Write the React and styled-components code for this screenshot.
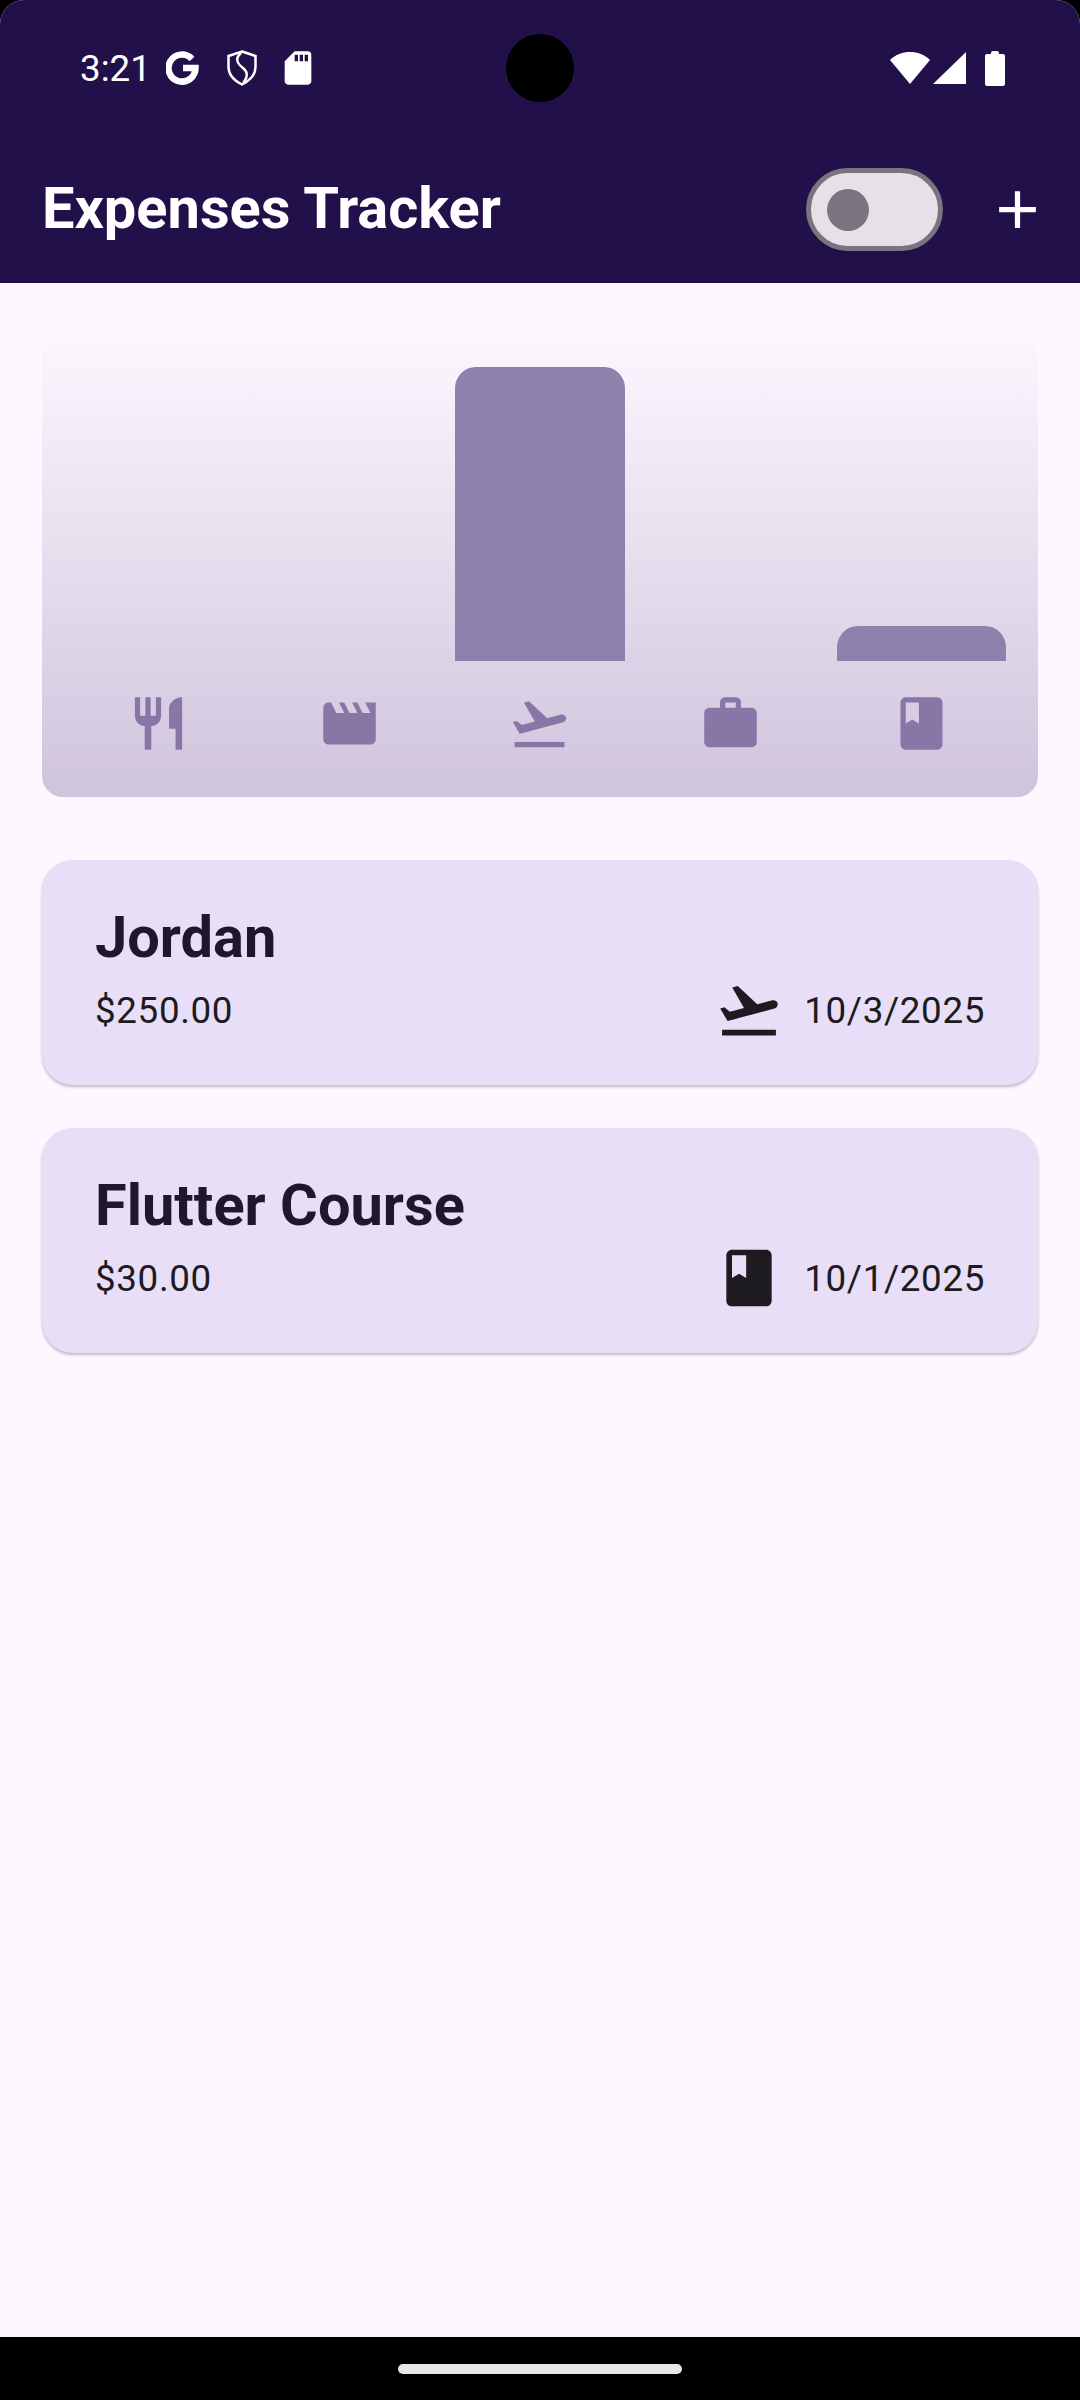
import React from 'react'
import styled, { createGlobalStyle } from 'styled-components'
import { MdRestaurant, MdMovie, MdFlightTakeoff, MdWork, MdBook, MdAdd, MdSdCard } from 'react-icons/md'

const GlobalStyle = createGlobalStyle`
html,body{
    margin:0;
    padding:0;
    background:#000;
}
body{
    font-family:Roboto,"Liberation Sans",sans-serif;
}
`;

const Screen = styled.div`
width:1080px;
height:2400px;
display:flex;
flex-direction:column;
background:#fef7ff;
border-radius:24px 24px 0 0;
overflow:hidden;
position:relative;
`;

const Top = styled.div`
background:#21104a;
height:283px;
flex-shrink:0;
`;

const StatusBar = styled.div`
height:136px;
display:flex;
align-items:center;
justify-content:space-between;
padding:0 75px 0 80px;
color:#fff;
box-sizing:border-box;
`;

const StatusLeft = styled.div`
display:flex;
align-items:center;
`;

const Time = styled.span`
font-size:36.75px;
font-weight:400;
margin-right:15px;
`;

const GoogleMark = styled.svg`
margin-right:28px;
`;

const SdMark = styled(MdSdCard)`
margin-left:21px;
`;

const StatusRight = styled.div`
display:flex;
align-items:center;
gap:3px;
`;

const BatteryGap = styled.div`
width:13px;
`;

const Camera = styled.div`
position:absolute;
top:34px;
left:506px;
width:68px;
height:68px;
border-radius:50%;
background:#000;
`;

const Toolbar = styled.div`
height:147px;
display:flex;
align-items:center;
padding-left:42px;
`;

const Title = styled.h1`
flex:1;
margin:0 0 3px;
font-size:57.75px;
font-weight:700;
color:#fff;
`;

const Switch = styled.div`
width:137px;
height:83px;
box-sizing:border-box;
border:5px solid #79747e;
border-radius:42px;
background:#e6e0e9;
display:flex;
align-items:center;
padding-left:16px;
`;

const Thumb = styled.div`
width:42px;
height:42px;
border-radius:50%;
background:#79747e;
`;

const AddButton = styled.div`
width:126px;
margin-left:11px;
height:126px;
display:flex;
align-items:center;
justify-content:center;
color:#fff;
`;

const Main = styled.div`
flex:1;
display:flex;
flex-direction:column;
padding:42px 42px 0;
`;

const Chart = styled.div`
height:472px;
border-radius:21px;
background:linear-gradient(to top,#cfc4dd,#fef7ff);
display:flex;
flex-direction:column;
padding:0 21px;
box-sizing:border-box;
`;

const Bars = styled.div`
height:336px;
display:flex;
align-items:flex-end;
flex-shrink:0;
`;

const BarSlot = styled.div`
flex:1;
padding:0 10.5px;
height:100%;
display:flex;
align-items:flex-end;
`;

const Bar = styled.div`
width:100%;
background:#8f81ad;
border-radius:21px 21px 0 0;
`;

const IconRow = styled.div`
display:flex;
margin-top:31px;
`;

const IconSlot = styled.div`
flex:1;
display:flex;
justify-content:center;
color:#8877a6;
`;

const Card = styled.div`
height:225px;
margin-top:${props => props.first ? '63px' : '43px'};
background:#e8def8;
border-radius:31px;
box-shadow:0 2px 3px rgba(0,0,0,.25);
padding:44px 53px 0;
box-sizing:border-box;
`;

const CardTitle = styled.div`
font-size:57.75px;
line-height:66px;
font-weight:700;
color:#1d192b;
`;

const CardRow = styled.div`
display:flex;
align-items:center;
justify-content:space-between;
margin-top:6px;
color:#1d1b20;
font-size:36.75px;
letter-spacing:.65px;
`;

const CardMeta = styled.div`
display:flex;
align-items:center;
gap:21px;
`;

const NavBar = styled.div`
height:63px;
background:#000;
display:flex;
justify-content:center;
padding-top:27px;
box-sizing:border-box;
flex-shrink:0;
`;

const Pill = styled.div`
width:284px;
height:10px;
border-radius:5px;
background:#e8e8e8;
`;

const bars = [0, 0, 294, 0, 35]
const icons = [MdRestaurant, MdMovie, MdFlightTakeoff, MdWork, MdBook]

const ShieldIcon = () => (
    <svg width="30" height="36" viewBox="0 0 30 36" fill="none" stroke="#fff" strokeWidth="2.5">
        <path d="M15 1.5 L28.5 6 V17 C28.5 25 22 31 15 34.5 C8 31 1.5 25 1.5 17 V6 Z" />
        <path d="M14 3 C7 9 11 14 16 18 C21 22 21 27 16 33" />
    </svg>
)

const GoogleIcon = () => (
    <GoogleMark width="33" height="34" viewBox="0 0 33 34" fill="none" stroke="#fff" strokeWidth="6.5">
        <path d="M26 8 A13.5 13.5 0 1 0 29.5 17 H17" />
    </GoogleMark>
)

const WifiIcon = () => (
    <svg width="40" height="32" viewBox="0 0 40 32" fill="#fff">
        <path d="M0 8 C11 -2.6 29 -2.6 40 8 L20 32 Z" />
    </svg>
)

const SignalIcon = () => (
    <svg width="33" height="32" viewBox="0 0 33 32" fill="#fff">
        <path d="M33 0 V32 H0 Z" />
    </svg>
)

const BatteryIcon = () => (
    <svg width="20" height="35" viewBox="0 0 20 35" fill="#fff">
        <path d="M6 2 Q6 0 8 0 H12 Q14 0 14 2 V3 H18 Q20 3 20 5 V33 Q20 35 18 35 H2 Q0 35 0 33 V5 Q0 3 2 3 H6 Z" />
    </svg>
)

function App() {
    return (
        <Screen>
            <GlobalStyle />
            <Top>
                <StatusBar>
                    <StatusLeft>
                        <Time>3:21</Time>
                        <GoogleIcon />
                        <ShieldIcon />
                        <SdMark size={40} />
                    </StatusLeft>
                    <StatusRight>
                        <WifiIcon />
                        <SignalIcon />
                        <BatteryGap />
                        <BatteryIcon />
                    </StatusRight>
                </StatusBar>
                <Toolbar>
                    <Title>Expenses Tracker</Title>
                    <Switch><Thumb /></Switch>
                    <AddButton><MdAdd size={63} /></AddButton>
                </Toolbar>
            </Top>
            <Camera />
            <Main>
                <Chart>
                    <Bars>
                        {bars.map((h, i) => (
                            <BarSlot key={i}><Bar style={{ height: h }} /></BarSlot>
                        ))}
                    </Bars>
                    <IconRow>
                        {icons.map((Icon, i) => (
                            <IconSlot key={i}><Icon size={63} /></IconSlot>
                        ))}
                    </IconRow>
                </Chart>
                <Card first>
                    <CardTitle>Jordan</CardTitle>
                    <CardRow>
                        <span>$250.00</span>
                        <CardMeta><MdFlightTakeoff size={68} />10/3/2025</CardMeta>
                    </CardRow>
                </Card>
                <Card>
                    <CardTitle>Flutter Course</CardTitle>
                    <CardRow>
                        <span>$30.00</span>
                        <CardMeta><MdBook size={68} />10/1/2025</CardMeta>
                    </CardRow>
                </Card>
            </Main>
            <NavBar><Pill /></NavBar>
        </Screen>
    )
}

export default App
